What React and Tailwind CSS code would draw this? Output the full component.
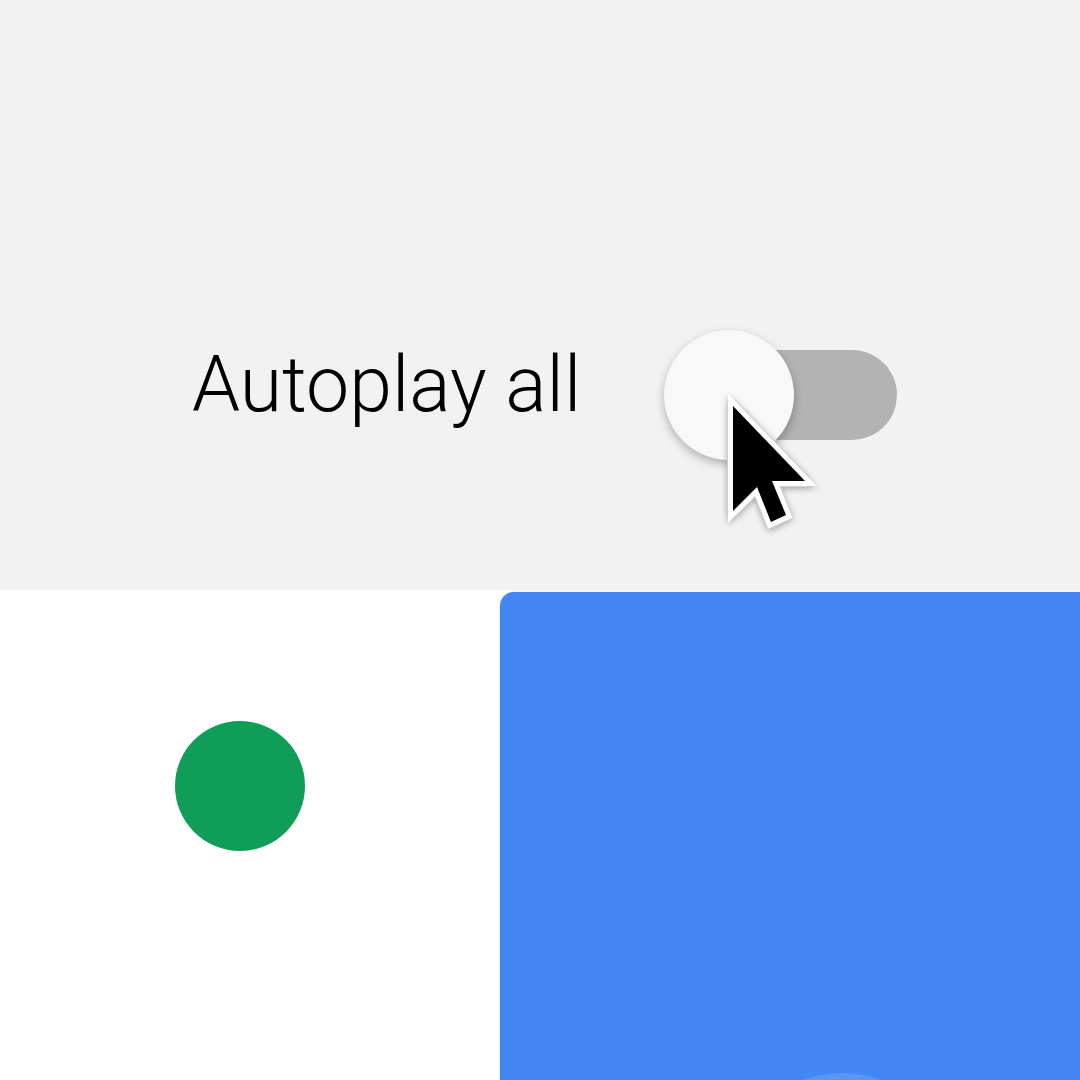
export default function App() {
  return (
    <div className="relative w-[1080px] h-[1080px] overflow-hidden bg-white" style={{ fontFamily: "Roboto, 'Liberation Sans', sans-serif" }}>
      <div className="h-[590px] bg-[#f2f2f2] flex items-start pl-[192px] pt-[330px]">
        <div className="w-[472px] mt-[17px] text-[77px] leading-[77px] font-light text-black whitespace-nowrap">Autoplay all</div>
        <div className="relative w-[233px] h-[130px]">
          <div className="absolute right-0 top-[20px] w-[190px] h-[90px] rounded-full bg-[#b3b3b3]"></div>
          <div className="absolute left-0 top-0 w-[130px] h-[130px] rounded-full bg-[#f8f8f8] shadow-[0_4px_10px_rgba(0,0,0,0.28)]"></div>
        </div>
      </div>
      <div className="flex h-[490px]">
        <div className="w-[500px] bg-white pl-[175px] pt-[131px]">
          <div className="w-[130px] h-[130px] rounded-full bg-[#109d58]"></div>
        </div>
        <div className="relative flex-1 mt-[2px] rounded-tl-[14px] bg-[#4487f4] overflow-hidden shadow-[0_0_3px_rgba(0,0,0,0.12)]">
          <div className="absolute left-[232px] top-[481px] w-[220px] h-[220px] rounded-full bg-[#5b96f5]"></div>
        </div>
      </div>
      <svg className="absolute left-0 top-0 pointer-events-none" width="1080" height="1080" viewBox="0 0 1080 1080" style={{ filter: "drop-shadow(0 2px 3px rgba(0,0,0,0.3))" }}>
        <polygon points="733,406 733,511 757,487 771,522 786,515 772,481 805,481" fill="#000" stroke="#d0d0d0" strokeWidth="12" strokeLinejoin="round" />
        <polygon points="733,406 733,511 757,487 771,522 786,515 772,481 805,481" fill="#000" stroke="#fff" strokeWidth="10" strokeLinejoin="miter" strokeMiterlimit="3" style={{ paintOrder: "stroke fill" }} />
      </svg>
    </div>
  );
}
